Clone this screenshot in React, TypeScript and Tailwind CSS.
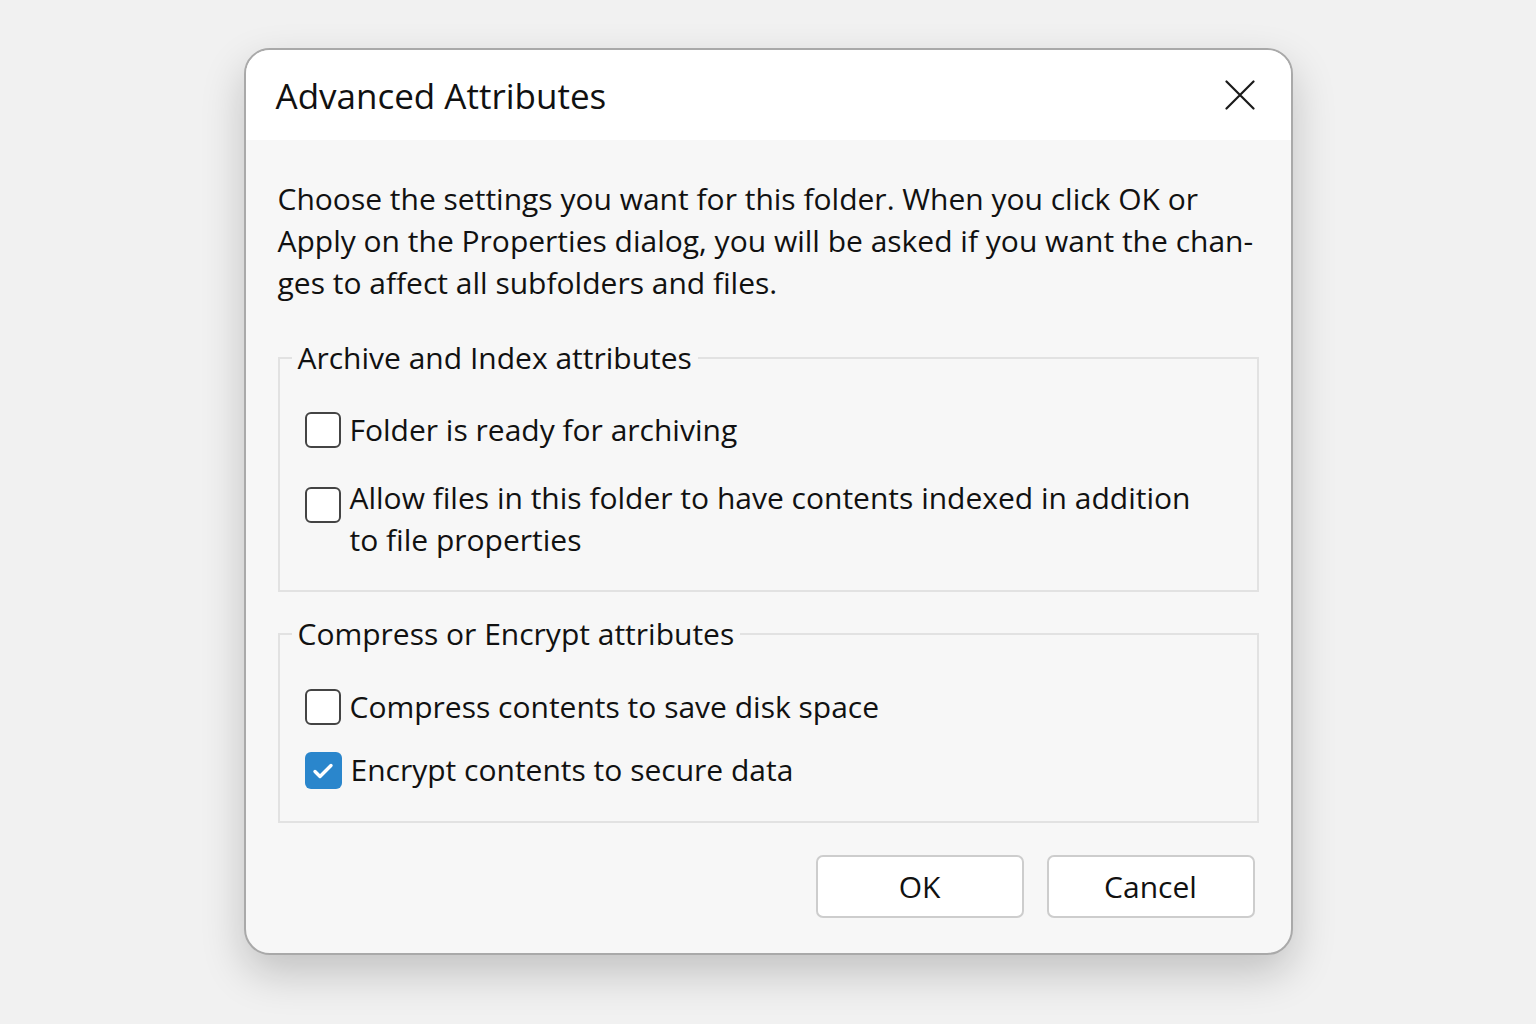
import React from 'react';

const font = { fontFamily: '"Open Sans", "Noto Sans", sans-serif' };

function Checkbox({ checked }: { checked?: boolean }) {
  if (checked) {
    return (
      <span className="flex h-[37px] w-[37px] shrink-0 items-center justify-center rounded-[6px] bg-[#2a86cc]">
        <svg width="26" height="26" viewBox="0 0 26 26" fill="none">
          <path d="M5 13.5l5 5 11-11" stroke="#ffffff" strokeWidth="3.4" strokeLinecap="round" strokeLinejoin="round" />
        </svg>
      </span>
    );
  }
  return <span className="block h-[36px] w-[36px] shrink-0 rounded-[6px] border-2 border-[#444444] bg-white" />;
}

function Option({ lines, checked, low }: { lines: string[]; checked?: boolean; low?: boolean }) {
  return (
    <div className="flex items-start gap-[9px]">
      <div className={low ? 'pt-[10px]' : 'pt-[3px]'}>
        <Checkbox checked={checked} />
      </div>
      <div className="text-[30px] leading-[42px] text-[#111111]">
        {lines.map((l) => (
          <div key={l} className="whitespace-nowrap">{l}</div>
        ))}
      </div>
    </div>
  );
}

function Group({ title, children, className }: { title: string; children: React.ReactNode; className?: string }) {
  return (
    <fieldset className={`border-2 border-[#e2e2e2] px-[25px] ${className ?? ''}`}>
      <legend className="ml-[-13px] px-[6px] text-[30px] leading-[40px] text-[#111111]">{title}</legend>
      {children}
    </fieldset>
  );
}

export default function App() {
  return (
    <div style={font} className="flex min-h-[1024px] w-full items-start justify-center bg-[#f1f1f1] pt-[48px]">
      <div className="w-[1049px] overflow-hidden rounded-[26px] border-2 border-[#a9a9a9] bg-[#f7f7f7] shadow-[0_18px_44px_rgba(0,0,0,0.2)]">
        {/* Title bar */}
        <div className="flex h-[90px] items-center justify-between bg-white pl-[30px] pr-[36px]">
          <h1 className="text-[35px] leading-none text-[#111111]">Advanced Attributes</h1>
          <svg width="30" height="30" viewBox="0 0 30 30" fill="none">
            <path d="M1.5 1.5l27 27M28.5 1.5l-27 27" stroke="#1a1a1a" strokeWidth="2.2" strokeLinecap="round" />
          </svg>
        </div>

        {/* Body */}
        <div className="px-[32px] pt-[38px] pb-[35px]">
          <div className="text-[30px] leading-[42px] text-[#111111]">
            <div className="whitespace-nowrap">Choose the settings you want for this folder. When you click OK or</div>
            <div className="whitespace-nowrap">Apply on the Properties dialog, you will be asked if you want the chan-</div>
            <div className="whitespace-nowrap">ges to affect all subfolders and files.</div>
          </div>

          <Group title="Archive and Index attributes" className="mt-[34px] pt-[31px] pb-[29px]">
            <div className="flex flex-col gap-[26px]">
              <Option lines={['Folder is ready for archiving']} />
              <Option lines={['Allow files in this folder to have contents indexed in addition', 'to file properties']} low />
            </div>
          </Group>

          <Group title="Compress or Encrypt attributes" className="mt-[22px] pt-[32px] pb-[30px]">
            <div className="flex flex-col gap-[21px]">
              <Option lines={['Compress contents to save disk space']} />
              <Option lines={['Encrypt contents to secure data']} checked />
            </div>
          </Group>

          <div className="mt-[32px] flex justify-end gap-[23px] pr-[4px]">
            <button className="h-[63px] w-[208px] rounded-[7px] border-2 border-[#cdcdcd] bg-white text-[30px] text-[#111111]">OK</button>
            <button className="h-[63px] w-[208px] rounded-[7px] border-2 border-[#cdcdcd] bg-white text-[30px] text-[#111111]">Cancel</button>
          </div>
        </div>
      </div>
    </div>
  );
}
